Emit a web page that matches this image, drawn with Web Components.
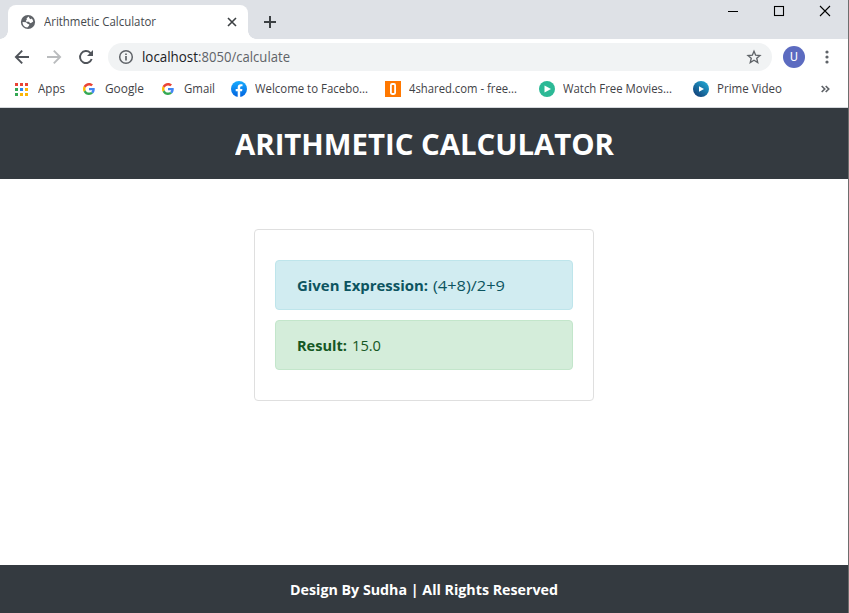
<!DOCTYPE html>
<html lang="en">
<head>
<meta charset="utf-8">
<title>Arithmetic Calculator</title>
<style>
html,body{margin:0;height:100%;overflow:hidden;background:#fff}
body{font-family:"Open Sans","Noto Sans",sans-serif}
</style>
</head>
<body>
<browser-window>
  <tab-strip slot="tabs"></tab-strip>
  <address-bar slot="toolbar"></address-bar>
  <bookmarks-bar slot="bookmarks"></bookmarks-bar>
  <calc-page></calc-page>
</browser-window>
<script>
const define = (name, html, init) => {
  const t = document.createElement('template');
  t.innerHTML = html;
  customElements.define(name, class extends HTMLElement {
    constructor() {
      super();
      this.attachShadow({mode: 'open'}).appendChild(t.content.cloneNode(true));
    }
    connectedCallback() { if (init) init(this, this.shadowRoot); }
  });
};

/* One line of text condensed or widened to the width in "w". */
define('fit-text', `<style>
:host{display:inline-block;white-space:nowrap;flex:none;text-align:left}
span{display:inline-block;transform-origin:0 50%}
</style><span><slot></slot></span>`, (el, root) => {
  const w = +el.getAttribute('w'), s = root.querySelector('span');
  const natural = s.getBoundingClientRect().width;
  el.style.width = w + 'px';
  if (natural) s.style.transform = 'scaleX(' + w / natural + ')';
});

define('browser-window', `<style>
:host{display:flex;flex-direction:column;height:613px;width:849px;box-sizing:border-box;border-right:1px solid #6e6e6e;background:#fff}
main{flex:1;display:flex;border-top:1px solid #d5d8dc;min-height:0}
::slotted(calc-page){flex:1}
</style><slot name="tabs"></slot><slot name="toolbar"></slot><slot name="bookmarks"></slot><main><slot></slot></main>`);

define('tab-strip', `<style>
:host{display:flex;height:39px;background:#dee1e6;color:#45494d;font-size:12px}
.tab{margin:5px 0 0 8px;width:240px;box-sizing:border-box;background:#fff;border-radius:8px 8px 0 0;display:flex;align-items:center;padding:0 10px 0 12px;position:relative}
.tab:before,.tab:after{content:"";position:absolute;bottom:0;width:8px;height:8px}
.tab:before{left:-8px;background:radial-gradient(circle at 0 0,transparent 7.5px,#fff 8px)}
.tab:after{right:-8px;background:radial-gradient(circle at 100% 0,transparent 7.5px,#fff 8px)}
fit-text{margin-left:8px;line-height:16px}
.x{margin-left:auto}
.plus{margin:15px 0 0 15px}
.win{margin-left:auto;display:flex}
svg{display:block;flex:none}
</style>
<div class="tab">
<svg width="16" height="16" viewBox="0 0 16 16"><circle cx="8" cy="8" r="7.100" fill="#5f6368"/><path d="M8.800 2.600L6.600 4.200l.2 1.500-1 1 .3 1.100h3l.9 1.400 1.500-.5 1.700-1.200A5.500 5.500 0 0 0 11.800 4.400l-1.200.8-1.200-1zM2.500 8l3.500.2 1.600 1.500 1.800.7-.4 1.300-1.700 1.800A5.500 5.500 0 0 1 2.500 8z" fill="#fff"/></svg>
<fit-text w="112">Arithmetic Calculator</fit-text>
<svg class="x" width="12" height="12" viewBox="0 0 12 12"><path d="M2 2l8 8M10 2l-8 8" stroke="#3c4043" stroke-width="1.6"/></svg>
</div>
<svg class="plus" width="14" height="14" viewBox="0 0 14 14"><path d="M7 1v12M1 7h12" stroke="#3c4043" stroke-width="2"/></svg>
<div class="win">
<svg width="46" height="24"><path d="M18 11.500h10" stroke="#000"/></svg>
<svg width="46" height="24"><rect x="18.500" y="6.500" width="9" height="9" fill="none" stroke="#000" stroke-width="1.100"/></svg>
<svg width="46" height="24"><path d="M18 6l10 10M28 6l-10 10" stroke="#000" stroke-width="1.100"/></svg>
</div>`);

define('address-bar', `<style>
:host{display:flex;height:36px;align-items:center;color:#5f6368;font-size:14px;box-sizing:border-box;padding:0 10.500px 0 12px}
svg{display:block;flex:none}
.nav{width:20px;height:20px;margin-right:12px}
.pill{width:664px;height:28px;border-radius:14px;background:#f1f3f4;display:flex;align-items:center;box-sizing:border-box;padding:0 10px;flex:none}
.pill .info{margin-right:8px}
.pill fit-text{margin-bottom:1px}
.host{color:#202124}
.star{margin-left:auto}
.avatar{width:22px;height:22px;border-radius:50%;background:#5c6bc0;color:#fff;font:12px/22px Roboto,sans-serif;text-align:center;margin-left:11px}
.menu{margin-left:auto}
</style>
<svg class="nav" viewBox="0 0 20 20"><path d="M17 10H4M10.200 3.700L3.900 10l6.300 6.300" fill="none" stroke="#50545a" stroke-width="1.900"/></svg>
<svg class="nav" viewBox="0 0 20 20"><path d="M3 10h13M9.800 3.700l6.300 6.300-6.300 6.300" fill="none" stroke="#babcbe" stroke-width="1.900"/></svg>
<svg class="nav" viewBox="0 0 20 20"><path d="M15.700 12A6 6 0 1 1 14.300 5.800L16 7.500" fill="none" stroke="#50545a" stroke-width="1.900"/><path d="M17 3v6h-6z" fill="#50545a"/></svg>
<div class="pill">
<svg class="info" width="16" height="16" viewBox="0 0 16 16"><circle cx="8" cy="8" r="6.300" fill="none" stroke="#5f6368" stroke-width="1.500"/><path d="M8 7v4.500M8 4.400v1.700" stroke="#5f6368" stroke-width="1.700"/></svg>
<fit-text class="host" w="56">localhost</fit-text><fit-text w="92">:8050/calculate</fit-text>
<svg class="star" width="16" height="16" viewBox="0 0 24 24"><path d="M12 3.200l2.500 6 6.500.5-4.900 4.200 1.500 6.400-5.600-3.400-5.600 3.400 1.500-6.400L3 9.700l6.500-.5z" fill="none" stroke="#5f6368" stroke-width="2"/></svg>
</div>
<div class="avatar">U</div>
<svg class="menu" width="22" height="16" viewBox="0 0 22 16"><g fill="#5f6368"><circle cx="11" cy="3" r="1.600"/><circle cx="11" cy="8" r="1.600"/><circle cx="11" cy="13" r="1.600"/></g></svg>`);

define('bookmark-item', `<style>
:host{display:flex;align-items:center;flex:none;font-size:12px}
.i{display:flex;flex:none}
::slotted(svg){display:block}
::slotted(fit-text){margin-bottom:1px}
</style><div class="i"><slot name="icon"></slot></div><slot></slot>`, (el, root) => {
  el.style.width = el.getAttribute('pitch') + 'px';
  root.querySelector('.i').style.width = el.getAttribute('indent') + 'px';
});

const G = `<svg slot="icon" width="12" height="12" viewBox="0 0 48 48"><path fill="#EA4335" d="M24 9.500c3.540 0 6.710 1.220 9.210 3.600l6.850-6.850C35.900 2.380 30.470 0 24 0 14.620 0 6.510 5.380 2.560 13.220l7.980 6.190C12.430 13.720 17.740 9.500 24 9.500z"/><path fill="#4285F4" d="M46.980 24.550c0-1.570-.15-3.090-.38-4.550H24v9.020h12.940c-.58 2.960-2.260 5.480-4.780 7.180l7.730 6c4.510-4.180 7.090-10.360 7.090-17.650z"/><path fill="#FBBC05" d="M10.530 28.590c-.48-1.450-.76-2.990-.76-4.590s.27-3.140.76-4.590l-7.980-6.190C.92 16.460 0 20.120 0 24s.92 7.540 2.560 10.780z"/><path fill="#34A853" d="M24 48c6.480 0 11.930-2.130 15.890-5.810l-7.730-6c-2.150 1.450-4.920 2.300-8.160 2.300-6.260 0-11.570-4.220-13.470-9.910l-7.980 6.190C6.510 42.620 14.620 48 24 48z"/></svg>`;

define('bookmarks-bar', `<style>
:host{display:flex;align-items:center;height:32px;padding:0 0 4px 15px;color:#3f4246;box-sizing:border-box}
svg{flex:none}
</style>
<bookmark-item pitch="68" indent="23"><svg slot="icon" width="13" height="13" shape-rendering="crispEdges"><path fill="#ea4335" d="M0 0h3v3h-3zM5 0h3v3h-3zM10 0h3v3h-3z"/><path fill="#34a853" d="M0 5h3v3h-3zM0 10h3v3h-3z"/><path fill="#2b88f0" d="M5 5h3v3h-3z"/><path fill="#fbb505" d="M10 5h3v3h-3zM5 10h3v3h-3zM10 10h3v3h-3z"/></svg><fit-text w="27">Apps</fit-text></bookmark-item>
<bookmark-item pitch="79" indent="22">${G}<fit-text w="39">Google</fit-text></bookmark-item>
<bookmark-item pitch="69" indent="22">${G}<fit-text w="31">Gmail</fit-text></bookmark-item>
<bookmark-item pitch="154" indent="24"><svg slot="icon" width="16" height="16" viewBox="0 0 16 16"><defs><linearGradient id="f" x2="0" y2="1"><stop stop-color="#18acfe"/><stop offset="1" stop-color="#0163e0"/></linearGradient></defs><circle cx="8" cy="8" r="8" fill="url(#f)"/><path fill="#fff" d="M6.700 16v-5.700H4.700V8h2V6.300c0-2 1.200-3.100 3-3.100.9 0 1.800.15 1.800.15v1.950h-1c-1 0-1.300.6-1.300 1.250V8h2.200l-.35 2.300H9.200V16z"/></svg><fit-text w="113">Welcome to Facebo...</fit-text></bookmark-item>
<bookmark-item pitch="154" indent="24"><svg slot="icon" width="16" height="16"><path fill="#ff7800" d="M0 0h16v16H0z"/><rect x="5.900" y="3" width="4.200" height="10" rx="1.200" fill="none" stroke="#fff" stroke-width="1.800"/></svg><fit-text w="108">4shared.com - free...</fit-text></bookmark-item>
<bookmark-item pitch="154" indent="24"><svg slot="icon" width="16" height="16"><circle cx="8" cy="8" r="8" fill="#2cb996"/><path fill="#fff" d="M5.500 4.500l6.500 3.500-6.500 3.500z"/></svg><fit-text w="109">Watch Free Movies...</fit-text></bookmark-item>
<bookmark-item pitch="128" indent="24"><svg slot="icon" width="16" height="16"><defs><linearGradient id="p" x1="1" y1="0" x2=".2" y2="1"><stop stop-color="#22b2dc"/><stop offset="1" stop-color="#123f78"/></linearGradient></defs><circle cx="8" cy="8" r="8" fill="url(#p)"/><path fill="#fff" d="M6 5.200l5 2.800-5 2.800z"/></svg><fit-text w="65">Prime Video</fit-text></bookmark-item>
<svg width="9" height="8" viewBox="0 0 9 8"><path d="M.7 1l3 3-3 3M4.700 1l3 3-3 3" fill="none" stroke="#5f6368" stroke-width="1.700"/></svg>`);

define('alert-box', `<style>
:host{display:flex;align-items:center;gap:5px;height:50px;box-sizing:border-box;border:1px solid #bee5eb;border-radius:4px;background:#d1ecf1;color:#0c5460;padding:0 21px 1px 20.500px;font-size:15px}
:host([type=success]){background:#d4edda;border-color:#c3e6cb;color:#155724}
</style><slot></slot>`);

define('calc-page', `<style>
:host{display:flex;flex-direction:column;min-height:0}
header,footer{background:#343a40;color:#fff;display:flex;align-items:center;justify-content:center;font-weight:700}
header{height:71px;font-size:29px;box-sizing:border-box;padding-bottom:1px}
footer{height:48px;font-size:14px}
section{flex:1;display:flex;justify-content:center;align-items:flex-start;padding-top:50px}
.card{width:340px;height:172px;box-sizing:border-box;border:1px solid #dfdfdf;border-radius:4px;padding:30px 20px;display:flex;flex-direction:column;gap:10px}
b{font-weight:700}
</style>
<header><fit-text w="379">ARITHMETIC CALCULATOR</fit-text></header>
<section><div class="card">
<alert-box><b><fit-text w="131">Given Expression:</fit-text></b><fit-text w="72">(4+8)/2+9</fit-text></alert-box>
<alert-box type="success"><b><fit-text w="50">Result:</fit-text></b><fit-text w="29">15.0</fit-text></alert-box>
</div></section>
<footer><fit-text w="268">Design By Sudha | All Rights Reserved</fit-text></footer>`);
</script>
</body>
</html>
